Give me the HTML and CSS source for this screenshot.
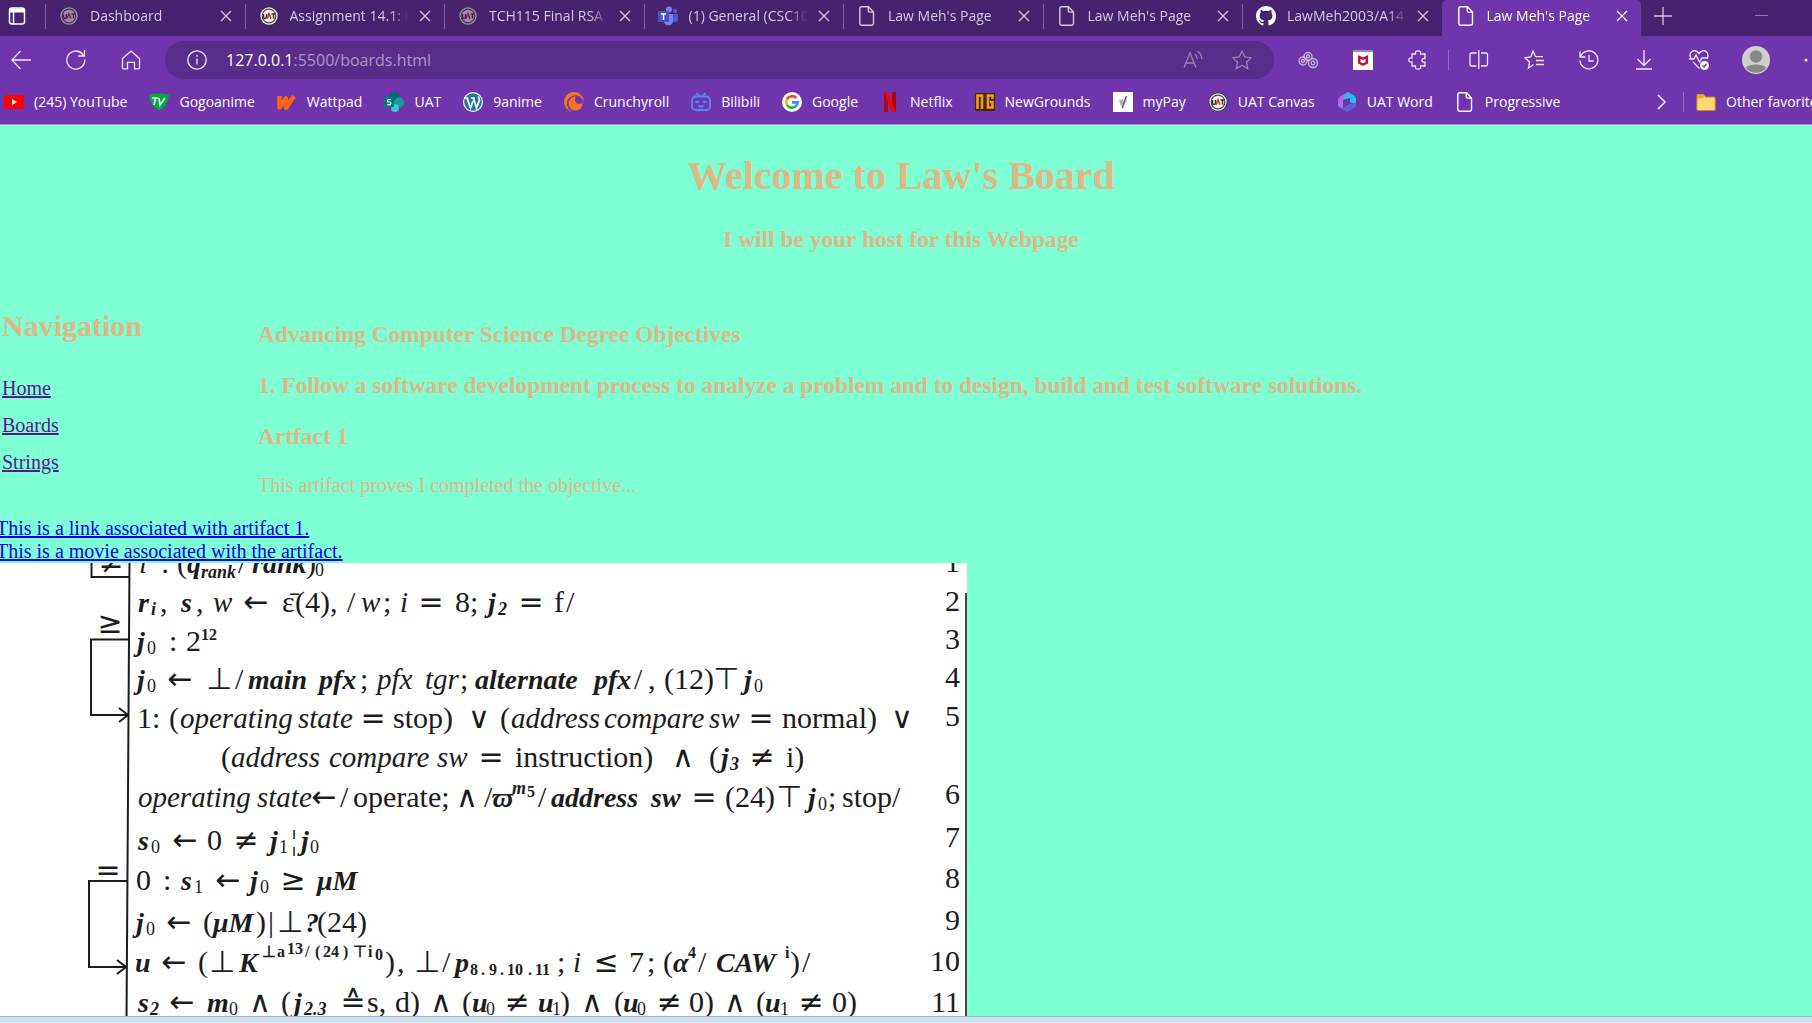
FILE: index.html
```html
<!DOCTYPE html>
<html lang="en">
<head>
<meta charset="utf-8">
<title>Law Meh's Page</title>
<link rel="stylesheet" href="styles.css">
</head>
<body>
<svg class="defs" aria-hidden="true">
  <defs>
    <symbol id="close" viewBox="0 0 12 12"><path d="M1 1l10 10M11 1L1 11" fill="none" stroke="currentColor" stroke-width="1.3"/></symbol>
    <symbol id="page" viewBox="0 0 20 20"><path d="M4.500 .8h7l5 5.200v11.500a1.700 1.700 0 0 1-1.700 1.700H4.500a1.700 1.700 0 0 1-1.700-1.700v-15A1.700 1.700 0 0 1 4.500 .8zM11.300 1v3.800a1.300 1.300 0 0 0 1.300 1.300h3.800" fill="none" stroke="currentColor" stroke-width="1.400"/></symbol>
    <symbol id="uat" viewBox="0 0 20 20"><circle cx="10" cy="10" r="9.600" fill="#333"/><circle cx="10" cy="10" r="8.700" fill="#f2f0f2"/><circle cx="10" cy="10" r="6.800" fill="none" stroke="#4a4650" stroke-width="1.200"/><path d="M4.500 8v3q0 1.500 1.500 1.500T7.500 11V8M12.500 8h4M14.500 8v4.500" fill="none" stroke="#333" stroke-width="1.400"/><path d="M8 12.800l2-5 2 5" fill="none" stroke="#d2232a" stroke-width="1.500"/></symbol>
  </defs>
</svg>

<header class="browser">
  <div class="tabbar">
    <button class="tab-actions" aria-label="Tab actions"><svg width="18" height="18" viewBox="0 0 18 18" fill="none" stroke="#fff" stroke-width="1.500"><rect x="1.500" y="1" width="15" height="16" rx="2.500"/><path d="M2 3.500h14" stroke-width="4"/><path d="M5.500 4v13"/></svg></button>
    <div class="tabs">
      <div class="tab"><svg class="ico dim"><use href="#uat"/></svg><span class="title">Dashboard</span><button class="x" aria-label="Close"><svg><use href="#close"/></svg></button></div>
      <div class="tab"><svg class="ico"><use href="#uat"/></svg><span class="title">Assignment 14.1: I</span><button class="x" aria-label="Close"><svg><use href="#close"/></svg></button></div>
      <div class="tab"><svg class="ico dim"><use href="#uat"/></svg><span class="title">TCH115 Final RSA</span><button class="x" aria-label="Close"><svg><use href="#close"/></svg></button></div>
      <div class="tab"><svg class="ico" viewBox="0 0 20 20"><circle cx="11" cy="3.500" r="3" fill="#7b83eb"/><circle cx="17" cy="5" r="2.200" fill="#5059c9"/><path d="M14 8h6v5.500a3 3 0 0 1-5 2z" fill="#5059c9"/><path d="M6 8h9v6.500a4.700 4.700 0 0 1-9 2z" fill="#7b83eb"/><rect y="5" width="11" height="11" rx="1" fill="#4b53bc"/><path d="M3 8h5M5.500 8v6" stroke="#fff" stroke-width="1.500"/></svg><span class="title">(1) General (CSC10</span><button class="x" aria-label="Close"><svg><use href="#close"/></svg></button></div>
      <div class="tab"><svg class="ico"><use href="#page"/></svg><span class="title">Law Meh's Page</span><button class="x" aria-label="Close"><svg><use href="#close"/></svg></button></div>
      <div class="tab"><svg class="ico"><use href="#page"/></svg><span class="title">Law Meh's Page</span><button class="x" aria-label="Close"><svg><use href="#close"/></svg></button></div>
      <div class="tab"><svg class="ico" viewBox="0 0 16 16"><path fill="#fff" d="M8 0C3.580 0 0 3.580 0 8c0 3.540 2.290 6.530 5.470 7.590.4.070.55-.17.55-.38 0-.19-.01-.82-.01-1.490-2.010.37-2.530-.49-2.690-.94-.09-.23-.48-.94-.82-1.130-.28-.15-.68-.52-.01-.53.63-.01 1.080.58 1.230.82.72 1.210 1.870.87 2.330.66.07-.52.28-.87.51-1.070-1.780-.2-3.640-.89-3.640-3.950 0-.87.31-1.590.82-2.150-.08-.2-.36-1.020.08-2.120 0 0 .67-.21 2.200.82.64-.18 1.320-.27 2-.27s1.360.09 2 .27c1.530-1.040 2.200-.82 2.200-.82.44 1.100.16 1.920.08 2.120.51.56.82 1.270.82 2.150 0 3.070-1.870 3.750-3.650 3.950.29.25.54.73.54 1.480 0 1.070-.01 1.930-.01 2.200 0 .21.15.46.55.38A8.010 8.010 0 0 0 16 8c0-4.420-3.580-8-8-8z"/></svg><span class="title">LawMeh2003/A14</span><button class="x" aria-label="Close"><svg><use href="#close"/></svg></button></div>
      <div class="tab active"><svg class="ico"><use href="#page"/></svg><span class="title">Law Meh's Page</span><button class="x" aria-label="Close"><svg><use href="#close"/></svg></button></div>
    </div>
    <div class="window">
      <button aria-label="New tab"><svg width="18" height="18" viewBox="0 0 18 18"><path d="M9 0v18M0 9h18" stroke="#cfc3dd" stroke-width="1.300"/></svg></button>
      <button aria-label="Minimize"><svg width="14" height="18" viewBox="0 0 14 18"><path d="M0 8.500h13" stroke="#8d79a5"/></svg></button>
    </div>
  </div>

  <div class="toolbar">
    <div class="group">
      <button aria-label="Back"><svg class="ico" viewBox="0 0 20 20"><path d="M20 10H1M9.500 1L1 10l8.500 9"/></svg></button>
      <button aria-label="Refresh"><svg class="ico" viewBox="0 0 20 20"><path d="M18.800 9.500A9 9 0 1 1 16.500 4l1.500 2M18.500 0v6h-6.200"/></svg></button>
      <button aria-label="Home"><svg class="ico" viewBox="0 0 20 20"><path d="M1.500 8.500L10 1l8.500 7.500v9.300q0 1-1 1h-4v-6.500h-7v6.500h-4q-1 0-1-1z"/></svg></button>
    </div>
    <div class="address">
      <svg class="ico" viewBox="0 0 20 20"><circle cx="10" cy="10" r="9.200"/><path d="M10 8.500v6M10 5v1.800"/></svg>
      <a class="url" href="#top">127.0.0.1<span>:5500/boards.html</span></a>
      <button aria-label="Read aloud"><svg class="ico soft" viewBox="0 0 20 20"><path d="M1 17.500L7 3l6 14.500M3 13h8M12 4q2 2 2 5M14.500 1q4 3 4.500 8"/></svg></button>
      <button aria-label="Add to favorites"><svg class="ico soft" viewBox="0 0 20 20"><path d="M10 1l2.800 5.900 6.400.8-4.700 4.500 1.200 6.400L10 15.500l-5.700 3.100 1.200-6.400L.8 7.700l6.400-.8z"/></svg></button>
    </div>
    <div class="group right">
      <button aria-label="Extension"><svg class="ico rings" viewBox="0 0 20 20"><circle cx="5" cy="11" r="4"/><circle cx="5" cy="11" r="1.500"/><circle cx="10" cy="6.500" r="4"/><circle cx="10" cy="6.500" r="1.500"/><circle cx="15" cy="13" r="4.500"/><circle cx="15" cy="13" r="1.800"/></svg></button>
      <button aria-label="McAfee"><svg class="ico" viewBox="0 0 20 20"><path d="M0 0h20v20H0z" fill="#fff" stroke="none"/><path d="M0 0h20v2H0z" fill="#98939e" stroke="none"/><path d="M5 5l5 2.500L15 5v8.500L10 16l-5-2.500z" fill="#c8102e" stroke="none"/><path d="M7.500 8.800L10 10l2.500-1.200v3.400L10 13.300l-2.500-1.100z" fill="#fff" stroke="none"/></svg></button>
      <button aria-label="Extensions"><svg class="ico" viewBox="0 0 20 20"><path d="M4 4h3.500q-.6-3.200 2.500-3.200T12.500 4H17v4.500q-3-.4-3 1.800t3 1.800V16h-4.500q.6 3.200-2.500 3.200T7.500 16H4v-4q-3.200.6-3.200-2T4 8z"/></svg></button>
      <span class="rule"></span>
      <button aria-label="Split screen"><svg class="ico" viewBox="0 0 20 20"><path d="M7.500 3H3Q1 3 1 5v9q0 2 2 2h4.500M12 3h4.500q2 0 2 2v9q0 2-2 2H12M9.800 0v19"/></svg></button>
      <button aria-label="Favorites"><svg class="ico" viewBox="0 0 20 20"><path d="M9.500 14.500L4.500 18l1-6L1 7.700l5.700-.8L9 1l2.500 5.700H19M12 10.500h8M12 14.500h8"/></svg></button>
      <button aria-label="History"><svg class="ico" viewBox="0 0 20 20"><path d="M1 1.500V7h5.500M1.500 6.500a9 9 0 1 1-.6 4M10 5v6h4.500"/></svg></button>
      <button aria-label="Downloads"><svg class="ico" viewBox="0 0 20 20"><path d="M10 0v15M3.500 9l6.500 6.500L16.500 9M2 19h16"/></svg></button>
      <button aria-label="Browser essentials"><svg class="ico" viewBox="0 0 20 20"><path d="M2 8Q-.5 4 3 1.500T10 3.500q3.500-4.500 7-2T18 9M0 9h5l2-4 3.500 7L13 8h6M4 12l6.500 6.500"/><circle cx="15.500" cy="15.500" r="4.500" fill="#fff" stroke="none"/><path d="M13.500 15.500l1.500 1.500 2.500-3" stroke="#7035ad"/></svg></button>
      <button class="profile" aria-label="Profile"><svg width="28" height="28" viewBox="0 0 28 28"><circle cx="14" cy="14" r="14" fill="#d2d0ce" stroke="none"/><circle cx="14" cy="10.500" r="6.200" fill="#8a8886" stroke="none"/><path d="M3.500 22q3-3.500 10.500-3.500T24.500 22A13.800 13.800 0 0 1 3.500 22z" fill="#8a8886" stroke="none"/></svg></button>
      <button class="more" aria-label="Settings and more"><svg width="8" height="20" viewBox="0 0 8 20"><circle cx="3" cy="10" r="1.500" fill="#fff" stroke="none"/></svg></button>
    </div>
  </div>

  <nav class="bookmarks" aria-label="Bookmarks">
    <a href="#yt"><svg class="ico" viewBox="0 0 20 20"><rect y="3" width="20" height="14" rx="3" fill="#f00"/><path d="M8 7l5 3-5 3z" fill="#fff"/></svg>(245) YouTube</a>
    <a href="#gogo"><svg class="ico" viewBox="0 0 20 20"><path d="M0 2.500q10-2 20 0Q19 14 10 18.500 1 14 0 2.500z" fill="#0aa64b"/><path d="M3 6h6M6.500 6L5 13M10 6l1 7 5-7" fill="none" stroke="#d8f5d8" stroke-width="1.700"/></svg>Gogoanime</a>
    <a href="#watt"><svg class="ico" viewBox="0 0 20 20"><path d="M2.500 4v11.500L9 6.500v9.500L17 4" fill="none" stroke="#ff6412" stroke-width="4.500" stroke-linejoin="round"/></svg>Wattpad</a>
    <a href="#uat"><svg class="ico" viewBox="0 0 20 20"><circle cx="10" cy="5.500" r="5.500" fill="#036c70"/><circle cx="15" cy="10.500" r="5" fill="#1a9ba1"/><circle cx="11" cy="16" r="4" fill="#37c6d0"/><rect y="5" width="10" height="10" rx="1" fill="#03787c"/><path d="M6.800 7.800q-3-1-3.300.7t1.800 1.500 1.400 1.700-3.400.8" fill="none" stroke="#fff" stroke-width="1.200"/></svg>UAT</a>
    <a href="#anime"><svg class="ico" viewBox="0 0 20 20"><circle cx="10" cy="10" r="10" fill="#fff"/><circle cx="10" cy="10" r="8.800" fill="#21759b"/><path d="M1.500 6h4M4 6l3.500 10L10 9M8 6h4M10.500 6L13.500 16 16.500 8q0-2-1.500-3.500" fill="none" stroke="#fff" stroke-width="1.700"/></svg>9anime</a>
    <a href="#crunchy"><svg class="ico" viewBox="0 0 20 20"><path d="M19.500 7A10 10 0 1 0 9 19.900 8.500 8.500 0 1 1 19.500 9z" fill="#f47521"/><path d="M18.500 10.500A7 7 0 1 1 12 4.500a3.500 3.500 0 1 0 6.500 6z" fill="#f47521"/></svg>Crunchyroll</a>
    <a href="#bili"><svg class="ico" viewBox="0 0 20 20" fill="none" stroke="#4c8bf5" stroke-width="1.800"><rect x="1" y="4.500" width="18" height="13.500" rx="3.500"/><path d="M5.500 1l3 3M14.500 1l-3 3M4.500 10.500q1.500-1.500 3.500 0M12 10.500q1.500-1.500 3.500 0M7.500 13.500q2.500 2 5 0"/></svg>Bilibili</a>
    <a href="#google"><svg class="ico" viewBox="0 0 20 20"><circle cx="10" cy="10" r="10" fill="#fff"/><g fill="none" stroke-width="2.700"><path d="M14.200 6A5.700 5.700 0 0 0 5 7.200" stroke="#ea4335"/><path d="M5 7.200a5.700 5.700 0 0 0 0 5.600" stroke="#fbbc05"/><path d="M5 12.800a5.700 5.700 0 0 0 8.700 1.500" stroke="#34a853"/><path d="M13.700 14.300Q15.600 12.700 15.700 10.300H10" stroke="#4285f4"/></g></svg>Google</a>
    <a href="#netflix"><svg class="ico" viewBox="0 0 20 20"><path d="M4 0h4v20H4zM12 0h4v20h-4z" fill="#b1060f"/><path d="M4 0h4l8 20h-4z" fill="#e50914"/></svg>Netflix</a>
    <a href="#ng"><svg class="ico" viewBox="0 0 20 20"><path d="M0 1h20v18H0z" fill="#4a2608"/><path d="M2.500 17V3.500H7V17M17.500 7V3.500H13V15.500h4.500V10H15" fill="none" stroke="#f49b14" stroke-width="2.600"/></svg>NewGrounds</a>
    <a href="#mypay"><svg class="ico" viewBox="0 0 20 20"><path d="M0 0h20v20H0z" fill="#fff"/><path d="M6 8l4-1 1 6-3 1zM11 8l3-1-1 4z" fill="#a9b1bd"/><path d="M9.500 16l2-7 2-5" fill="none" stroke="#59616e" stroke-width="1.500"/></svg>myPay</a>
    <a href="#canvas"><svg class="ico"><use href="#uat"/></svg>UAT Canvas</a>
    <a href="#word"><svg class="ico" viewBox="0 0 20 20"><path d="M11 0L3 4.500Q1 6 1 8v6l5 3V8q0-2 2-3l5-3z" fill="#b36ae8"/><path d="M11 0l6 3.500q2 1.200 2 3.500v6l-6-3V6L6 8q1-5 5-8z" fill="#28bdf2"/><path d="M1 14l5 2 7-4 6-1q0 4-2 5l-7 4-7-4Q1 15.500 1 14z" fill="#5863d8"/></svg>UAT Word</a>
    <a href="#prog"><svg class="ico"><use href="#page"/></svg>Progressive</a>
    <div class="overflow">
      <button aria-label="More bookmarks"><svg width="10" height="16" viewBox="0 0 10 16"><path d="M1 1l7 7-7 7" fill="none" stroke="#fff" stroke-width="1.500"/></svg></button>
      <a href="#other"><svg class="ico" viewBox="0 0 20 20"><path d="M1 2.500h6.500l2 2.500H18q1.200 0 1.200 1.200v11q0 1.300-1.200 1.300H2Q.8 18.500.8 17z" fill="#ffd978" stroke="#c58b12"/><path d="M1 2.500h6.500l1 2-2 2H1z" fill="#f2b01e"/></svg>Other favorites</a>
    </div>
  </nav>
</header>

<main class="page" id="top">
  <div class="welcome">
    <h1>Welcome to Law's Board</h1>
    <h3>I will be your host for this Webpage</h3>
  </div>
  <div class="columns">
    <nav class="side">
      <h2>Navigation</h2>
      <a href="#home">Home</a>
      <a href="#boards">Boards</a>
      <a href="#strings">Strings</a>
    </nav>
    <section class="objectives">
      <h3>Advancing Computer Science Degree Objectives</h3>
      <h3>1. Follow a software development process to analyze a problem and to design, build and test software solutions.</h3>
      <h3>Artfact 1</h3>
      <p>This artifact proves I completed the objective...</p>
    </section>
  </div>
  <div class="links">
    <a href="#artifact">This is a link associated with artifact 1.</a>
    <a href="#movie">This is a movie associated with the artifact.</a>
  </div>
  <div class="scan">
    <svg width="967" height="460" viewBox="0 0 967 460" role="img" aria-label="Scanned program listing">
      <rect width="967" height="460" fill="#fefefe"/>
      <g fill="none" stroke="#1c1c1c" stroke-width="2">
        <path d="M129.500 0L128 230 126.500 460M91.500 0v14h38M129 76.500H91v75.500h36M119 145l9 7-9 7M127 318H89v86h37M117 397l9 7-9 7"/>
        <path d="M966 30v430" stroke="#444"/>
      </g>
      <g class="listing">
        <text y="10"><tspan class="o" x="111">≠</tspan><tspan class="i" x="139">i</tspan><tspan x="161">:</tspan><tspan x="177">(</tspan><tspan class="b" x="187">q</tspan><tspan class="b s" x="201" dy="5">rank</tspan><tspan x="238" dy="-5">/</tspan><tspan class="b" x="252">rank</tspan><tspan x="306">)</tspan><tspan class="s" x="315" dy="3">0</tspan></text>
        <text y="49"><tspan class="b" x="138">r</tspan><tspan class="b s" x="151" dy="3">i</tspan><tspan x="160" dy="-3">,</tspan><tspan class="b" x="181">s</tspan><tspan x="196">,</tspan><tspan class="i" x="213">w</tspan><tspan class="o" x="256">←</tspan><tspan x="282">ε̄</tspan><tspan x="295">(4),</tspan><tspan x="347">/</tspan><tspan class="i" x="361">w</tspan><tspan x="383">;</tspan><tspan class="i" x="400">i</tspan><tspan class="o" x="431">=</tspan><tspan x="455">8;</tspan><tspan class="b" x="488">j</tspan><tspan class="b s" x="498" dy="3">2</tspan><tspan class="o" x="531" dy="-3">=</tspan><tspan x="554">f</tspan><tspan x="566">/</tspan></text>
        <text y="88"><tspan class="o" x="110" dy="-18">≥</tspan><tspan class="b" x="137" dy="18">j</tspan><tspan class="s" x="147" dy="3">0</tspan><tspan x="169" dy="-3">:</tspan><tspan x="186">2</tspan><tspan class="t" x="201" dy="-11">12</tspan></text>
        <text y="126"><tspan class="b" x="137">j</tspan><tspan class="s" x="147" dy="3">0</tspan><tspan class="o" x="180" dy="-3">←</tspan><tspan class="o" x="219">⊥</tspan><tspan x="235">/</tspan><tspan class="b" x="248">main</tspan><tspan class="b" x="319">pfx</tspan><tspan x="360">;</tspan><tspan class="i" x="377">pfx</tspan><tspan class="i" x="425">tgr</tspan><tspan x="460">;</tspan><tspan class="b" x="475">alternate</tspan><tspan class="b" x="594">pfx</tspan><tspan x="634">/</tspan><tspan x="648">,</tspan><tspan x="664">(12)</tspan><tspan class="o" x="726">⊤</tspan><tspan class="b" x="744">j</tspan><tspan class="s" x="754" dy="3">0</tspan></text>
        <text y="165"><tspan x="137">1:</tspan><tspan x="169">(</tspan><tspan class="i" x="180">operating</tspan><tspan class="i" x="298">state</tspan><tspan class="o" x="373">=</tspan><tspan x="393">stop)</tspan><tspan class="o" x="479">∨</tspan><tspan x="500">(</tspan><tspan class="i" x="511">address</tspan><tspan class="i" x="604">compare</tspan><tspan class="i" x="709">sw</tspan><tspan class="o" x="761">=</tspan><tspan x="782">normal)</tspan><tspan class="o" x="902">∨</tspan></text>
        <text y="204"><tspan x="221">(</tspan><tspan class="i" x="231">address</tspan><tspan class="i" x="329">compare</tspan><tspan class="i" x="437">sw</tspan><tspan class="o" x="491">=</tspan><tspan x="515">instruction)</tspan><tspan class="o" x="683">∧</tspan><tspan x="709">(</tspan><tspan class="b" x="721">j</tspan><tspan class="b s" x="730" dy="3">3</tspan><tspan class="o" x="762" dy="-3">≠</tspan><tspan x="786">i)</tspan></text>
        <text y="244"><tspan class="i" x="138">operating</tspan><tspan class="i" x="257">state</tspan><tspan class="o" x="324">←</tspan><tspan x="340">/</tspan><tspan x="353">operate;</tspan><tspan class="o" x="467">∧</tspan><tspan x="484">/</tspan><tspan class="b" x="492">ϖ</tspan><tspan class="b s" x="512" dy="-13">m</tspan><tspan class="t" x="527" dy="3">5</tspan><tspan x="538" dy="10">/</tspan><tspan class="b" x="551">address</tspan><tspan class="b" x="651">sw</tspan><tspan class="o" x="704">=</tspan><tspan x="725">(24)</tspan><tspan class="o" x="789">⊤</tspan><tspan class="b" x="808">j</tspan><tspan class="s" x="818" dy="3">0</tspan><tspan x="828" dy="-3">;</tspan><tspan x="842">stop/</tspan></text>
        <text y="287"><tspan class="b" x="138">s</tspan><tspan class="s" x="151" dy="3">0</tspan><tspan class="o" x="185" dy="-3">←</tspan><tspan x="207">0</tspan><tspan class="o" x="246">≠</tspan><tspan class="b" x="270">j</tspan><tspan class="s" x="279" dy="3">1</tspan><tspan x="291" dy="-3">¦</tspan><tspan class="b" x="301">j</tspan><tspan class="s" x="310" dy="3">0</tspan></text>
        <text y="327"><tspan class="o" x="108" dy="-10">=</tspan><tspan x="136" dy="10">0</tspan><tspan x="163">:</tspan><tspan class="b" x="181">s</tspan><tspan class="s" x="194" dy="3">1</tspan><tspan class="o" x="228" dy="-3">←</tspan><tspan class="b" x="250">j</tspan><tspan class="s" x="260" dy="3">0</tspan><tspan class="o" x="293" dy="-3">≥</tspan><tspan class="b" x="317">μM</tspan></text>
        <text y="369"><tspan class="b" x="136">j</tspan><tspan class="s" x="146" dy="3">0</tspan><tspan class="o" x="179" dy="-3">←</tspan><tspan x="203">(</tspan><tspan class="b" x="213">μM</tspan><tspan x="256">)</tspan><tspan x="268">|</tspan><tspan class="o" x="290">⊥</tspan><tspan class="b" x="305">?</tspan><tspan x="317">(24)</tspan></text>
        <text y="409"><tspan class="b" x="135">u</tspan><tspan class="o" x="174">←</tspan><tspan x="198">(</tspan><tspan class="o" x="222">⊥</tspan><tspan class="b" x="239">K</tspan><tspan class="t" x="262" dy="-15">⊥</tspan><tspan class="t" x="277">a</tspan><tspan class="t" x="287" dy="-3">13</tspan><tspan class="t" x="305" dy="3">/</tspan><tspan class="t" x="315">(</tspan><tspan class="t" x="323">24</tspan><tspan class="t" x="343">)</tspan><tspan class="t" x="353">⊤</tspan><tspan class="t" x="368">i</tspan><tspan class="t" x="375" dy="3">0</tspan><tspan x="385" dy="12">)</tspan><tspan x="397">,</tspan><tspan class="o" x="427">⊥</tspan><tspan x="442">/</tspan><tspan class="b" x="455">p</tspan><tspan class="t" x="470" dy="3">8</tspan><tspan class="t" x="481">.</tspan><tspan class="t" x="489">9</tspan><tspan class="t" x="500">.</tspan><tspan class="t" x="507">10</tspan><tspan class="t" x="528">.</tspan><tspan class="t" x="535">11</tspan><tspan x="557" dy="-3">;</tspan><tspan class="i" x="573">i</tspan><tspan class="o" x="606">≤</tspan><tspan x="629">7</tspan><tspan x="647">;</tspan><tspan x="663">(</tspan><tspan class="b" x="673">α</tspan><tspan class="t" x="688" dy="-14">4</tspan><tspan x="698" dy="14">/</tspan><tspan class="b" x="716">CAW</tspan><tspan class="t" x="785" dy="-14">i</tspan><tspan x="790" dy="14">)</tspan><tspan x="802">/</tspan></text>
        <text y="449"><tspan class="b" x="138">s</tspan><tspan class="b s" x="150" dy="3">2</tspan><tspan class="o" x="182" dy="-3">←</tspan><tspan class="b" x="207">m</tspan><tspan class="s" x="229" dy="3">0</tspan><tspan class="o" x="260" dy="-3">∧</tspan><tspan x="281">(</tspan><tspan class="b" x="294">j</tspan><tspan class="b s" x="304" dy="3">2.3</tspan><tspan class="o" x="353" dy="-3">≙</tspan><tspan x="367">s,</tspan><tspan x="395">d)</tspan><tspan class="o" x="441">∧</tspan><tspan x="462">(</tspan><tspan class="b" x="472">u</tspan><tspan class="s" x="486" dy="3">0</tspan><tspan class="o" x="517" dy="-3">≠</tspan><tspan class="b" x="538">u</tspan><tspan class="s" x="552" dy="3">1</tspan><tspan x="560" dy="-3">)</tspan><tspan class="o" x="592">∧</tspan><tspan x="614">(</tspan><tspan class="b" x="623">u</tspan><tspan class="s" x="637" dy="3">0</tspan><tspan class="o" x="669" dy="-3">≠</tspan><tspan x="689">0)</tspan><tspan class="o" x="735">∧</tspan><tspan x="756">(</tspan><tspan class="b" x="765">u</tspan><tspan class="s" x="780" dy="3">1</tspan><tspan class="o" x="811" dy="-3">≠</tspan><tspan x="832">0)</tspan></text>
        <g class="numbers">
          <text x="960" y="9">1</text><text x="960" y="48">2</text><text x="960" y="86">3</text><text x="960" y="124">4</text><text x="960" y="163">5</text><text x="960" y="241">6</text><text x="960" y="284">7</text><text x="960" y="325">8</text><text x="960" y="367">9</text><text x="960" y="408">10</text><text x="960" y="449">11</text>
        </g>
      </g>
    </svg>
  </div>
</main>
<footer class="taskbar"></footer>
</body>
</html>
```

FILE: styles.css
```css
* { box-sizing: border-box; }

body {
  margin: 0;
  height: 100vh;
  display: flex;
  flex-direction: column;
  overflow: hidden;
  background: #7fffd4;
  font-family: "Liberation Serif", "Times New Roman", serif;
  font-size: 20px;
  line-height: 23px;
}

.defs { position: absolute; width: 0; height: 0; }

button {
  display: flex;
  align-items: center;
  justify-content: center;
  padding: 0;
  border: 0;
  background: none;
  color: inherit;
  flex: none;
}

.ico { width: 20px; height: 20px; flex: none; }
.dim { opacity: 0.5; }

/* Browser frame */
.browser {
  flex: none;
  background: #7035ad;
  border-bottom: 1px solid #a98fd0;
  color: #fff;
  font-family: "Open Sans", "Noto Sans", sans-serif;
  font-size: 14px;
  line-height: 20px;
}

.tabbar { display: flex; height: 36px; background: #47236d; }
.tab-actions { width: 45px; height: 32px; padding-right: 12px; }
.tabs { display: flex; flex: 1; min-width: 0; }

.tab {
  display: flex;
  align-items: center;
  flex: 1;
  min-width: 0;
  gap: 11px;
  padding: 0 13px 4px 14px;
  color: #d3c8e0;
  background: linear-gradient(#7d629b, #7d629b) 0 4px / 1px 25px no-repeat;
}

.tab.active { background: #7035ad; color: #fff; border-radius: 5px 5px 0 0; }
.title {
  flex: 1;
  min-width: 0;
  overflow: hidden;
  white-space: nowrap;
  mask-image: linear-gradient(90deg, #000 85%, transparent);
}
.x { width: 12px; height: 12px; }
.x svg { width: 12px; height: 12px; }

.window {
  display: flex;
  justify-content: space-between;
  width: 171px;
  padding: 0 43px 5px 13px;
}

.toolbar { display: flex; align-items: center; height: 48px; padding: 0 0 0 11px; gap: 24px; }
.toolbar svg { fill: none; stroke: #f0eaf6; stroke-width: 1.3; }
.toolbar .soft { stroke: #9a82b3; }
.toolbar .rings { stroke: #c5bccd; }
.group { display: flex; align-items: center; gap: 35px; flex: none; }
.right { padding-right: 1px; }

.address {
  display: flex;
  align-items: center;
  flex: 1;
  min-width: 0;
  height: 38px;
  padding: 0 22px;
  gap: 29px;
  border-radius: 19px;
  background: #5a2c8b;
}
.url {
  flex: 1;
  margin-left: -10px;
  color: #fff;
  font-size: 16px;
  text-decoration: none;
}
.url span { color: #ab97bf; }
.rule { width: 1px; height: 20px; margin: 0 -15px; background: #9569c3; }
.profile { margin: 0 -2px; }

.bookmarks {
  display: flex;
  align-items: center;
  height: 40px;
  padding: 0 0 4px 4px;
  gap: 22px;
  overflow: hidden;
}
.bookmarks a {
  display: flex;
  align-items: center;
  gap: 10px;
  flex: none;
  color: #fff;
  text-decoration: none;
  white-space: nowrap;
}
.overflow { display: flex; flex: none; gap: 16px; width: 155px; margin-left: auto; }
.overflow a { padding-left: 12px; border-left: 1px solid #9569c3; }

/* Web page */
.page {
  display: flex;
  flex-direction: column;
  flex: 1;
  min-height: 0;
  overflow: hidden;
  color: #deb887;
}
h1, h2, h3, p { margin: 0; }
h1 { font-size: 40px; line-height: 46px; }
h2 { font-size: 30px; line-height: 34px; }
h3 { line-height: 27px; }

.welcome { display: flex; flex-direction: column; gap: 27px; padding: 28px 10px 0 0; text-align: center; }

.columns { display: flex; margin-top: 56px; padding-left: 2px; }
.side { display: flex; flex-direction: column; align-items: flex-start; width: 256px; gap: 14px; }
.side h2 { margin-bottom: 20px; }
.side a { color: #551a8b; }
.objectives { display: flex; flex-direction: column; flex: 1; gap: 24px; padding-top: 12px; }

.links { display: flex; flex-direction: column; align-items: flex-start; margin: 20px 0 0 -4px; }
.links a { color: #00e; }

.scan { flex: 1; min-height: 0; overflow: hidden; }
.scan svg { display: block; }
.listing { fill: #1c1c1c; font-size: 30px; }
.i { font-size: 29px; font-style: italic; }
.b { font-size: 28px; font-style: italic; font-weight: bold; }
.s { font-size: 18px; }
.t { font-size: 16px; font-weight: bold; }
.o { font-family: "DejaVu Sans", sans-serif; font-size: 30px; text-anchor: middle; }
.numbers { text-anchor: end; }

.taskbar { flex: none; height: 7px; background: #d0e3f0; border-top: 1px solid #a9b4c4; }
```
